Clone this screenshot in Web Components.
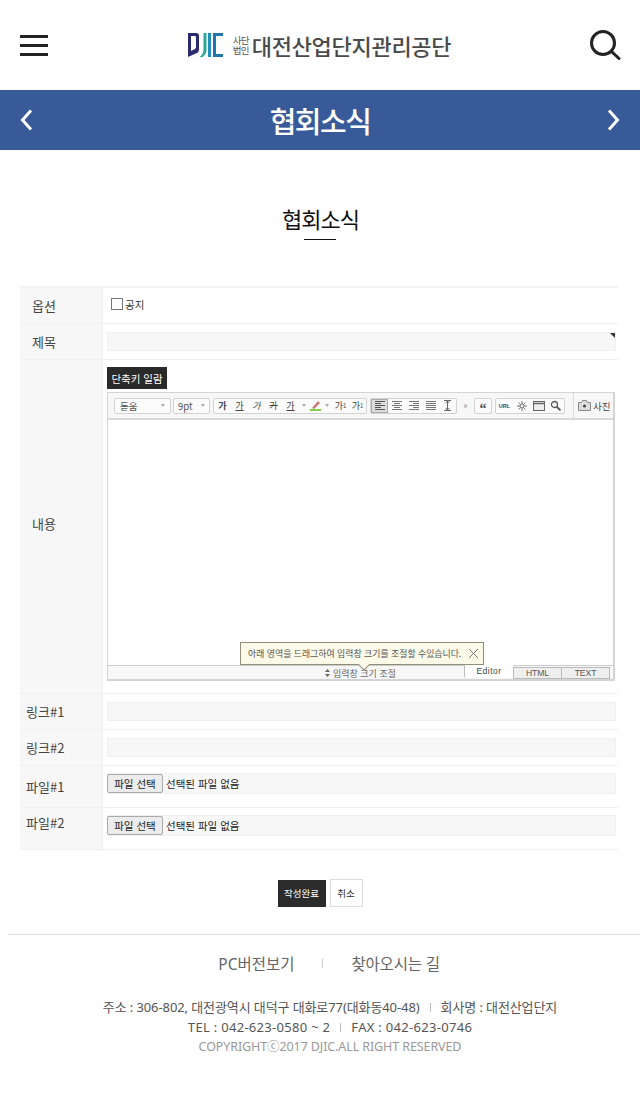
<!DOCTYPE html>
<html lang="ko">
<head>
<meta charset="utf-8">
<title>협회소식</title>
<style>
	html, body { margin: 0; padding: 0; background: #fff; }
	body { font-family: "Noto Sans CJK KR", "Noto Sans", sans-serif; width: 640px; height: 1099px; overflow: hidden; }
</style>
</head>
<body>
<site-header></site-header>
<page-bar>협회소식</page-bar>
<section-title>협회소식</section-title>
<board-form>
	<form-row label="옵션" h="35"><label-check>공지</label-check></form-row>
	<form-row label="제목" h="35"><text-field flag></text-field></form-row>
	<form-row label="내용" h="333" top><board-editor></board-editor></form-row>
	<form-row label="링크#1" h="35" wide><text-field></text-field></form-row>
	<form-row label="링크#2" h="35" wide><text-field></text-field></form-row>
	<form-row label="파일#1" h="41" wide file><file-field></file-field></form-row>
	<form-row label="파일#2" h="41" wide file raised><file-field></file-field></form-row>
</board-form>
<form-actions></form-actions>
<site-footer></site-footer>

<script>
class SiteHeader extends HTMLElement {
	constructor() {
		super();
		this.attachShadow({ mode: 'open' });
		this.shadowRoot.innerHTML = `
			<style>
				:host { display: flex; height: 90px; align-items: center; justify-content: space-between; padding: 0 19px 0 20px; box-sizing: border-box; background: #fff; }
				.burger { width: 28px; display: flex; flex-direction: column; gap: 6px; }
				.burger i { display: block; height: 3px; background: #222; }
				.logo { display: flex; align-items: center; margin-left: 1px; }
				.small { font-size: 9.5px; line-height: 10px; color: #555; margin: 0 2px 0 8px; width: 18px; text-align: center; letter-spacing: -0.6px; }
				.name { font-size: 22px; font-weight: 500; color: #4a4a4a; letter-spacing: -0.3px; line-height: 24px; }
				svg { display: block; }
			</style>
			<div class="burger"><i></i><i></i><i></i></div>
			<div class="logo">
				<svg width="37" height="24" viewBox="0 0 37 24">
					<path d="M1 0h8q3 0 3 3v13q0 3-2 4l-9 4z M4 3v15l4-2q1-1 1-2V4q0-1-1-1z" fill="#2b2a6c" fill-rule="evenodd"/>
					<path d="M12.500 24q4-3 4-7V0h3v17q0 4-4 7z" fill="#2aa79a"/>
					<rect x="21" y="0" width="3" height="24" fill="#1f8fb5"/>
					<path d="M26 0h10v3h-7v18h7v3H26z" fill="#1f75ad"/>
				</svg>
				<div class="small">사단 법인</div>
				<div class="name">대전산업단지관리공단</div>
			</div>
			<svg width="32" height="32" viewBox="0 0 32 32" fill="none" stroke="#222" stroke-width="3" stroke-linecap="round">
				<circle cx="14" cy="14" r="11.5"/><path d="M22.5 22.5L30 29.5"/>
			</svg>`;
	}
}

class PageBar extends HTMLElement {
	constructor() {
		super();
		this.attachShadow({ mode: 'open' });
		this.shadowRoot.innerHTML = `
			<style>
				:host { display: flex; height: 60px; align-items: center; justify-content: space-between; padding: 0 20px; box-sizing: border-box; background: #385a99; color: #fff; font-size: 29px; font-weight: 500; letter-spacing: -1.5px; }
				svg { display: block; }
			</style>
			<svg width="13" height="22" viewBox="0 0 13 22" fill="none" stroke="#fff" stroke-width="3"><path d="M11 1.500L2.500 11L11 20.500"/></svg>
			<slot></slot>
			<svg width="13" height="22" viewBox="0 0 13 22" fill="none" stroke="#fff" stroke-width="3"><path d="M2 1.500L10.500 11L2 20.500"/></svg>`;
	}
}

class SectionTitle extends HTMLElement {
	constructor() {
		super();
		this.attachShadow({ mode: 'open' });
		this.shadowRoot.innerHTML = `
			<style>
				:host { display: flex; flex-direction: column; align-items: center; height: 136px; padding: 52px 0 0 1px; box-sizing: border-box; color: #111; font-size: 22px; line-height: 32px; letter-spacing: -1px; }
				i { display: block; width: 32px; height: 1px; background: #111; margin: 5px 2px 0 0; }
			</style>
			<slot></slot><i></i>`;
	}
}

class BoardForm extends HTMLElement {
	constructor() {
		super();
		this.attachShadow({ mode: 'open' });
		this.shadowRoot.innerHTML = `
			<style>
				:host { display: block; margin: 0 22px 0 20px; border-top: 2px solid #f3f3f3; }
			</style>
			<slot></slot>`;
	}
}

class FormRow extends HTMLElement {
	constructor() {
		super();
		this.attachShadow({ mode: 'open' });
		const h = this.getAttribute('h');
		this.shadowRoot.innerHTML = `
			<style>
				:host { display: grid; grid-template-columns: 83px 1fr; height: ${h}px; border-bottom: 1px solid #f0f0f0; box-sizing: content-box; }
				.label { background: #f7f7f7; border-right: 1px solid #f0f0f0; font-size: 13px; color: #444; display: flex; align-items: center; padding-left: 12px; box-sizing: border-box; }
				:host([wide]) .label { padding-left: 6px; }
				:host([top]) .label { padding-bottom: 6px; }
				:host([raised]) .label { align-items: flex-start; padding-top: 5px; }
				.body { padding: 0 2px 0 4px; display: flex; align-items: center; min-width: 0; }
				:host([top]) .body { align-items: flex-start; padding-top: 7px; }
				:host([file]) .body { align-items: flex-start; padding-top: 7px; }
			</style>
			<div class="label">${this.getAttribute('label')}</div>
			<div class="body"><slot></slot></div>`;
	}
}

class LabelCheck extends HTMLElement {
	constructor() {
		super();
		this.attachShadow({ mode: 'open' });
		this.shadowRoot.innerHTML = `
			<style>
				:host { display: flex; align-items: center; gap: 2px; margin: -3px 0 0 4px; font-size: 10.5px; color: #333; }
				i { display: block; width: 10px; height: 10px; border: 1px solid #777; background: #fff; }
			</style>
			<i></i><slot></slot>`;
	}
}

class TextField extends HTMLElement {
	constructor() {
		super();
		this.attachShadow({ mode: 'open' });
		this.shadowRoot.innerHTML = `
			<style>
				:host { display: block; position: relative; flex: 1; height: 19px; background: #f7f7f7; border: 1px solid #f0f0f0; box-sizing: border-box; }
				:host([flag])::after { content: ""; position: absolute; right: 0; top: 0; border-style: solid; border-width: 0 5px 5px 0; border-color: transparent #333 transparent transparent; }
			</style>`;
	}
}

class FileField extends HTMLElement {
	constructor() {
		super();
		this.attachShadow({ mode: 'open' });
		this.shadowRoot.innerHTML = `
			<style>
				:host { display: flex; flex: 1; height: 21px; align-items: center; gap: 3px; background: #f7f7f7; border: 1px solid #f0f0f0; box-sizing: border-box; font-size: 10.5px; color: #222; }
				b { font-weight: 400; display: flex; align-items: center; justify-content: center; width: 56px; height: 19px; margin-left: -1px; background: #ececec; border: 1px solid #aaa; border-radius: 2px; box-sizing: border-box; color: #222; }
			</style>
			<b>파일 선택</b><span>선택된 파일 없음</span>`;
	}
}

class BoardEditor extends HTMLElement {
	constructor() {
		super();
		this.attachShadow({ mode: 'open' });
		this.shadowRoot.innerHTML = `
			<style>
				:host { display: block; flex: 1; min-width: 0; font-size: 9.5px; color: #555; }
				.hint { width: 60px; height: 22px; background: #2a2a2a; color: #fff; font-size: 10.5px; display: flex; align-items: center; justify-content: center; }
				.box { position: relative; height: 289px; width: 508px; margin-top: 3px; border: 2px solid #d4d4d4; border-width: 1px 2px 2px 1px; box-sizing: border-box; display: flex; flex-direction: column; background: #fff; }
				.tools { height: 25px; background: #f7f7f7; border-bottom: 2px solid #d8d8d8; display: flex; align-items: center; padding-left: 6px; gap: 3px; box-sizing: content-box; white-space: nowrap; }
				.tools > * { flex: none; }
				.group { display: flex; align-items: center; height: 16px; border: 1px solid #d2d2d2; border-radius: 2px; background: #fbfbfb; box-sizing: border-box; }
				.group span { flex: none; display: flex; align-items: center; justify-content: center; height: 100%; color: #444; font-size: 9px; }
				.font { justify-content: space-between; padding: 0 5px; width: 57px; font-size: 9.5px; color: #555; margin-right: -1px; }
				.size { justify-content: space-between; padding: 0 4px; width: 37px; font-size: 9.5px; color: #555; }
				.arrow { display: block; width: 0; height: 0; border: solid transparent; border-width: 3px 2.500px 0; border-top-color: #aaa; }
				.group span.t { width: 17px; }
				.group span.pen { width: 13px; }
				.group span.nar { width: 10px; }
				.group span.q { width: 16px; font-weight: 700; font-family: "Liberation Serif", serif; font-size: 14px; padding-top: 6px; box-sizing: border-box; }
				.on { background: #ddd; box-shadow: inset 0 0 0 1px #aaa; }
				.more { color: #888; font-size: 9px; width: 11px; text-align: center; }
				.photo { margin-left: 5px; border-left: 1px solid #ddd; height: 25px; padding-left: 4px; display: flex; align-items: center; gap: 2px; color: #444; font-size: 9.500px; }
				.area { flex: 1; }
				.resize { position: relative; height: 13px; background: #f7f7f7; border-top: 1px solid #ccc; display: flex; justify-content: flex-end; padding-right: 3px; }
				.grip { position: absolute; left: 0; right: 0; top: 0; display: flex; justify-content: center; align-items: center; gap: 3px; height: 14px; font-size: 9px; color: #666; }
				.tab { position: relative; width: 47px; height: 10px; margin-top: 1px; text-align: center; border: 1px solid #bbb; border-right: 0; line-height: 10px; font-size: 8.500px; color: #555; font-family: "Liberation Sans", sans-serif; background: #efefef; box-sizing: content-box; }
				.tab:last-child { border-right: 1px solid #bbb; }
				.tab.cur { width: 48px; height: 13px; margin-top: -1px; background: #fff; border: 0; border-left: 1px solid #bbb; border-bottom-left-radius: 3px; line-height: 12px; letter-spacing: 0.5px; color: #444; }
				.tip { position: absolute; left: 132px; top: 249px; width: 244px; height: 23px; background: #fbf9e8; border: 1px solid #8f8f78; box-sizing: border-box; display: flex; align-items: center; padding-left: 7px; font-size: 8.900px; color: #555; white-space: nowrap; }
				.tip svg { position: absolute; right: 4px; top: 5px; }
				.tip::after { content: ""; position: absolute; left: 119px; bottom: -5px; width: 7px; height: 7px; background: #fbf9e8; border: solid #8f8f78; border-width: 0 1px 1px 0; transform: rotate(45deg); }
				svg { display: block; }
			</style>
			<div class="hint">단축키 일람</div>
			<div class="box">
				<div class="tools">
					<div class="group font">돋움<i class="arrow"></i></div>
					<div class="group size">9pt<i class="arrow"></i></div>
					<div class="group">
						<span class="t"><b>가</b></span><span class="t"><u>가</u></span><span class="t"><i>가</i></span><span class="t"><s>가</s></span><span class="t"><u>가</u></span><span class="t nar"><i class="arrow"></i></span>
						<span class="t pen"><svg width="11" height="11" viewBox="0 0 11 11"><path d="M2 8L8 1l2 2-6 6z" fill="#c77"/><rect y="9" width="11" height="2" fill="#8c4"/></svg></span><span class="t nar"><i class="arrow"></i></span>
						<span class="t">가<sup style="font-size:6px;line-height:0">1</sup></span><span class="t">가<sub style="font-size:6px;line-height:0">1</sub></span>
					</div>
					<div class="group">
						<span class="t on"><svg width="10" height="9" viewBox="0 0 10 9" fill="#555"><path d="M0 0h10v1H0zM0 2h6v1H0zM0 4h10v1H0zM0 6h6v1H0zM0 8h10v1H0z"/></svg></span>
						<span class="t"><svg width="10" height="9" viewBox="0 0 10 9" fill="#777"><path d="M0 0h10v1H0zM2 2h6v1H2zM0 4h10v1H0zM2 6h6v1H2zM0 8h10v1H0z"/></svg></span>
						<span class="t"><svg width="10" height="9" viewBox="0 0 10 9" fill="#777"><path d="M0 0h10v1H0zM4 2h6v1H4zM0 4h10v1H0zM4 6h6v1H4zM0 8h10v1H0z"/></svg></span>
						<span class="t"><svg width="10" height="9" viewBox="0 0 10 9" fill="#777"><path d="M0 0h10v1H0zM0 2h10v1H0zM0 4h10v1H0zM0 6h10v1H0zM0 8h10v1H0z"/></svg></span>
						<span class="t"><svg width="9" height="11" viewBox="0 0 9 11" fill="none" stroke="#666"><path d="M1 .5h7M1 10.500h7M4.500 1v9M2.500 3l2-2 2 2M2.500 8l2 2 2-2"/></svg></span>
					</div>
					<span class="more">»</span>
					<div class="group"><span class="q">“</span></div>
					<div class="group">
						<span class="t" style="font-size:5.500px;font-weight:700;font-family:'Liberation Sans',sans-serif">URL</span>
						<span class="t"><svg width="10" height="10" viewBox="0 0 10 10" fill="none" stroke="#777"><path d="M5 0v10M0 5h10M1.500 1.500l7 7M8.500 1.500l-7 7"/><circle cx="5" cy="5" r="2" fill="#fff"/></svg></span>
						<span class="t"><svg width="12" height="10" viewBox="0 0 12 10" fill="#eee" stroke="#666"><rect x=".5" y=".5" width="11" height="9"/><path d="M1 2.500h10" stroke-width="1.500"/></svg></span>
						<span class="t"><svg width="11" height="11" viewBox="0 0 11 11" fill="none" stroke="#555" stroke-width="1.300"><circle cx="4.500" cy="4.500" r="3"/><path d="M7 7l3.500 3.500" stroke-width="1.800"/></svg></span>
					</div>
					<div class="photo"><svg width="13" height="11" viewBox="0 0 13 11"><path d="M.5 2.500h3l1-2h4l1 2h3v8H.5z" fill="#ddd" stroke="#888"/><circle cx="6.500" cy="6" r="1.500" fill="#444"/></svg>사진</div>
				</div>
				<div class="area"></div>
				<div class="resize">
					<div class="grip"><svg width="5" height="8" viewBox="0 0 5 8" fill="#666"><path d="M2.500 0L5 3H0zM2.500 8L0 5h5z"/></svg><span>입력창 크기 조절</span></div>
					<div class="tab cur">Editor</div><div class="tab">HTML</div><div class="tab">TEXT</div>
				</div>
				<div class="tip">아래 영역을 드래그하여 입력창 크기를 조절할 수있습니다.
					<svg width="11" height="11" viewBox="0 0 11 11" stroke="#777" fill="none"><path d="M1 1l9 9M10 1l-9 9"/></svg>
				</div>
			</div>`;
	}
}

class FormActions extends HTMLElement {
	constructor() {
		super();
		this.attachShadow({ mode: 'open' });
		this.shadowRoot.innerHTML = `
			<style>
				:host { display: flex; justify-content: center; gap: 4px; padding: 29px 0 27px 0; align-items: center; font-size: 9.500px; }
				div { display: flex; align-items: center; justify-content: center; box-sizing: border-box; }
				.ok { width: 48px; height: 27px; background: #2b2b2b; color: #fff; }
				.no { width: 33px; height: 28px; background: #fff; border: 1px solid #ddd; color: #333; }
			</style>
			<div class="ok">작성완료</div><div class="no">취소</div>`;
	}
}

class SiteFooter extends HTMLElement {
	constructor() {
		super();
		this.attachShadow({ mode: 'open' });
		this.shadowRoot.innerHTML = `
			<style>
				:host { display: block; margin-left: 8px; border-top: 1px solid #ddd; color: #555; text-align: center; font-family: "Noto Sans", "Noto Sans CJK KR", sans-serif; }
				.links { display: flex; justify-content: center; align-items: center; height: 56px; font-size: 15.500px; color: #666; margin-left: 10px; }
				.links i { width: 1px; height: 9px; background: #ccc; margin: 0 29px 0 27px; }
				.links span + i + span { letter-spacing: -0.2px; }
				.info { margin-left: 12px; font-size: 13px; line-height: 20px; padding-top: 6px; color: #555; }
				.info i { display: inline-block; width: 1px; height: 9px; background: #bbb; margin: 0 10px; }
				.line1 { letter-spacing: -0.1px; }
				.line2 { letter-spacing: 0.3px; }
				.copy { color: #999; font-size: 12.500px; letter-spacing: -0.1px; }
			</style>
			<div class="links"><span>PC버전보기</span><i></i><span>찾아오시는 길</span></div>
			<div class="info">
				<div class="line1">주소 : 306-802, 대전광역시 대덕구 대화로77(대화동40-48)<i></i>회사명 : 대전산업단지</div>
				<div class="line2">TEL : 042-623-0580 ~ 2<i></i>FAX : 042-623-0746</div>
				<div class="copy">COPYRIGHTⓒ2017 DJIC.ALL RIGHT RESERVED</div>
			</div>`;
	}
}

customElements.define('site-header', SiteHeader);
customElements.define('page-bar', PageBar);
customElements.define('section-title', SectionTitle);
customElements.define('board-form', BoardForm);
customElements.define('form-row', FormRow);
customElements.define('label-check', LabelCheck);
customElements.define('text-field', TextField);
customElements.define('file-field', FileField);
customElements.define('board-editor', BoardEditor);
customElements.define('form-actions', FormActions);
customElements.define('site-footer', SiteFooter);
</script>
</body>
</html>
